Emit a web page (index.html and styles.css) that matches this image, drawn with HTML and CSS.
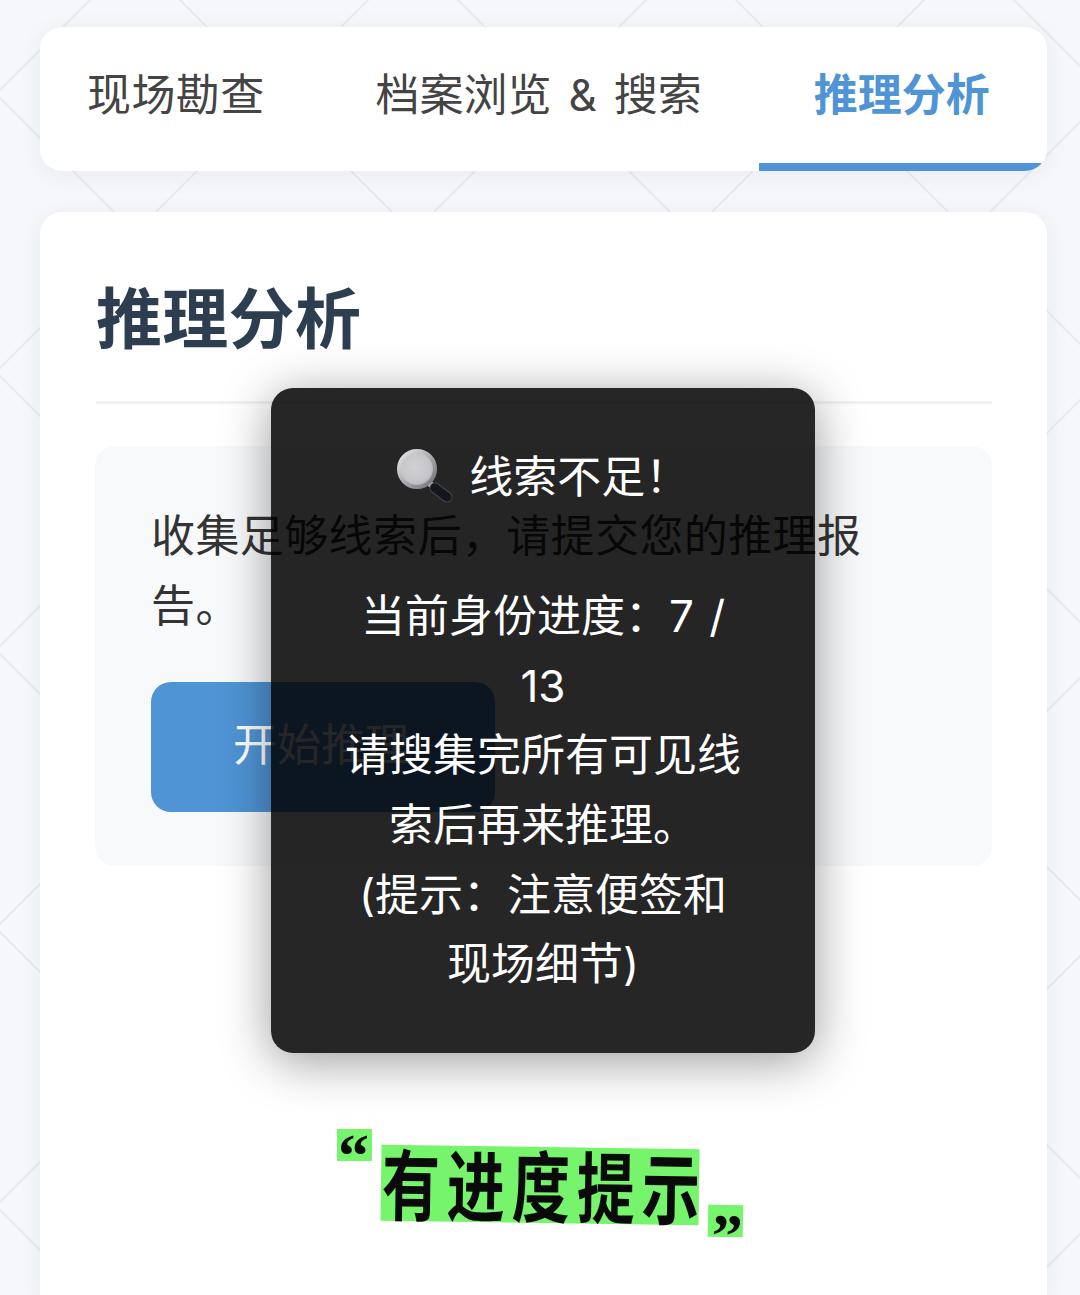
FILE: index.html
```html
<!DOCTYPE html>
<html lang="zh-CN">
<head>
<meta charset="utf-8">
<title>推理分析</title>
<link rel="stylesheet" href="styles.css">
</head>
<body>
<svg class="bg-pattern" aria-hidden="true">
  <defs>
    <pattern id="lattice" width="278" height="278" x="-143" y="-45" patternUnits="userSpaceOnUse">
      <path d="M0 0L278 278M278 0L0 278" class="lattice-line"/>
    </pattern>
  </defs>
  <rect width="100%" height="100%" fill="url(#lattice)"/>
</svg>
<main class="page">
  <nav class="tabs">
    <div class="tab tab-first">现场勘查</div>
    <div class="tab tab-middle">档案浏览 &amp; 搜索</div>
    <div class="tab tab-active">推理分析</div>
  </nav>
  <section class="card">
    <h2 class="title">推理分析</h2>
    <div class="panel">
      <p class="panel-text">收集足够线索后，请提交您的推理报告。</p>
      <button class="primary">开始推理</button>
    </div>
  </section>
</main>
<div class="toast">
  <svg class="emoji" viewBox="0 0 60 60" aria-hidden="true">
    <defs>
      <radialGradient id="lens" cx="45%" cy="45%" r="55%">
        <stop offset="0" stop-color="#d2d2d5"/>
        <stop offset="0.8" stop-color="#c4c4c8"/>
        <stop offset="1" stop-color="#a5a5aa"/>
      </radialGradient>
      <linearGradient id="ring" x1="0" y1="0" x2="1" y2="1">
        <stop offset="0" stop-color="#e8e8ea"/>
        <stop offset="1" stop-color="#6f7074"/>
      </linearGradient>
    </defs>
    <path d="M32 38L38 43" class="neck"/>
    <path d="M38 43L50 52" class="handle-edge"/>
    <path d="M38 43L50 52" class="handle"/>
    <circle cx="20" cy="24" r="18" fill="url(#lens)" stroke="url(#ring)" stroke-width="4"/>
  </svg>
  <span> 线索不足！</span><br><br>当前身份进度：7 / 13<br>请搜集完所有可见线索后再来推理。<br>(提示：注意便签和现场细节)
</div>
<div class="sticker">
  <span class="quote quote-open">“</span>
  <span class="sticker-main"><span class="sticker-text">有进度提示</span></span>
  <span class="quote quote-close">”</span>
</div>
</body>
</html>
```
FILE: styles.css
```css
* { box-sizing: border-box; }
html, body { margin: 0; height: 100%; overflow: hidden; }
body {
  position: relative;
  background: #f5f7fa;
  color: #333;
  font-family: Inter, "Noto Sans CJK SC", sans-serif;
  font-size: 44px;
}
.bg-pattern { position: absolute; inset: 0; width: 100%; height: 100%; }
.lattice-line { stroke: #e9ebef; stroke-width: 2; fill: none; }
.page {
  position: relative;
  display: flex;
  flex-direction: column;
  gap: 41px;
  height: 100%;
  padding: 27px 33px 0 40px;
}
.tabs {
  display: flex;
  flex: none;
  height: 144px;
  padding-left: 46px;
  background: #fff;
  border-radius: 22px;
  box-shadow: 0 4px 24px rgba(40, 50, 80, .06);
  overflow: hidden;
}
.tab {
  position: relative;
  display: flex;
  align-items: center;
  padding: 0 57px 14px;
  color: #444;
  white-space: pre;
  word-spacing: 4.5px;
}
.tab-first { padding-left: 1px; padding-right: 54px; letter-spacing: .4px; }
.tab-active {
  padding: 0 52px 14px 55px;
  color: #4f94d4;
  font-weight: 700;
}
.tab-active::after {
  content: "";
  position: absolute;
  left: 0;
  right: 0;
  bottom: 0;
  height: 8px;
  background: #4f94d4;
  border-bottom-right-radius: 14px 8px;
}
.card {
  flex: 1;
  padding: 56px 55px 0;
  background: #fff;
  border-radius: 22px 22px 0 0;
  box-shadow: 0 4px 24px rgba(40, 50, 80, .06);
}
.title {
  margin: 0 0 0 1px;
  padding-bottom: 31px;
  color: #2c3e50;
  font-size: 66px;
  line-height: 102px;
  font-weight: 700;
  letter-spacing: .3px;
  border-bottom: 3px solid #f0f1f3;
}
.panel {
  margin-top: 42px;
  padding: 55px 56px 54px;
  background: #f8f9fb;
  border-radius: 20px;
}
.panel-text {
  margin: 0 0 41px;
  line-height: 70px;
  letter-spacing: .4px;
  color: #333;
}
.primary {
  display: block;
  width: 344px;
  height: 130px;
  padding: 0 4px 10px 0;
  border: 0;
  border-radius: 20px;
  background: #4f94d4;
  color: #fff;
  font: inherit;
}
.toast {
  position: absolute;
  left: 271px;
  top: 388px;
  width: 544px;
  height: 665px;
  padding: 55px 72px;
  border-radius: 22px;
  background: rgba(0, 0, 0, .85);
  color: #fff;
  font-size: 44px;
  line-height: 69.6px;
  text-align: center;
  word-spacing: 3px;
  box-shadow: 0 8px 50px rgba(0, 0, 0, .4);
}
.emoji { width: 60px; height: 60px; margin-right: -3px; vertical-align: -12px; }
.neck { stroke: #b5b6ba; stroke-width: 6; fill: none; }
.handle-edge { stroke: #44464f; stroke-width: 11; stroke-linecap: round; fill: none; }
.handle { stroke: #14161d; stroke-width: 9; stroke-linecap: round; fill: none; }
.sticker {
  position: absolute;
  left: 337px;
  top: 1129px;
  width: 406px;
  height: 108px;
}
.quote {
  position: absolute;
  width: 35px;
  height: 32px;
  background: #76f46c;
  color: #0a0a0a;
  font-family: "Liberation Serif", serif;
  font-weight: 700;
  font-size: 62px;
  text-align: center;
}
.quote-open { left: 0; top: 0; line-height: 52px; padding-right: 2px; }
.quote-close { right: 0; bottom: 0; line-height: 62px; padding-left: 4px; transform: rotate(1deg); }
.sticker-main {
  position: absolute;
  left: 44px;
  top: 18px;
  width: 318px;
  height: 76px;
  background: #76f46c;
  transform: rotate(.8deg);
}
.sticker-text {
  display: block;
  padding-left: 1px;
  color: #0a0a0a;
  font-family: "Noto Sans CJK SC", sans-serif;
  font-weight: 700;
  font-size: 58px;
  line-height: 72px;
  letter-spacing: 7px;
  white-space: nowrap;
  transform: scaleY(1.34);
}
```
